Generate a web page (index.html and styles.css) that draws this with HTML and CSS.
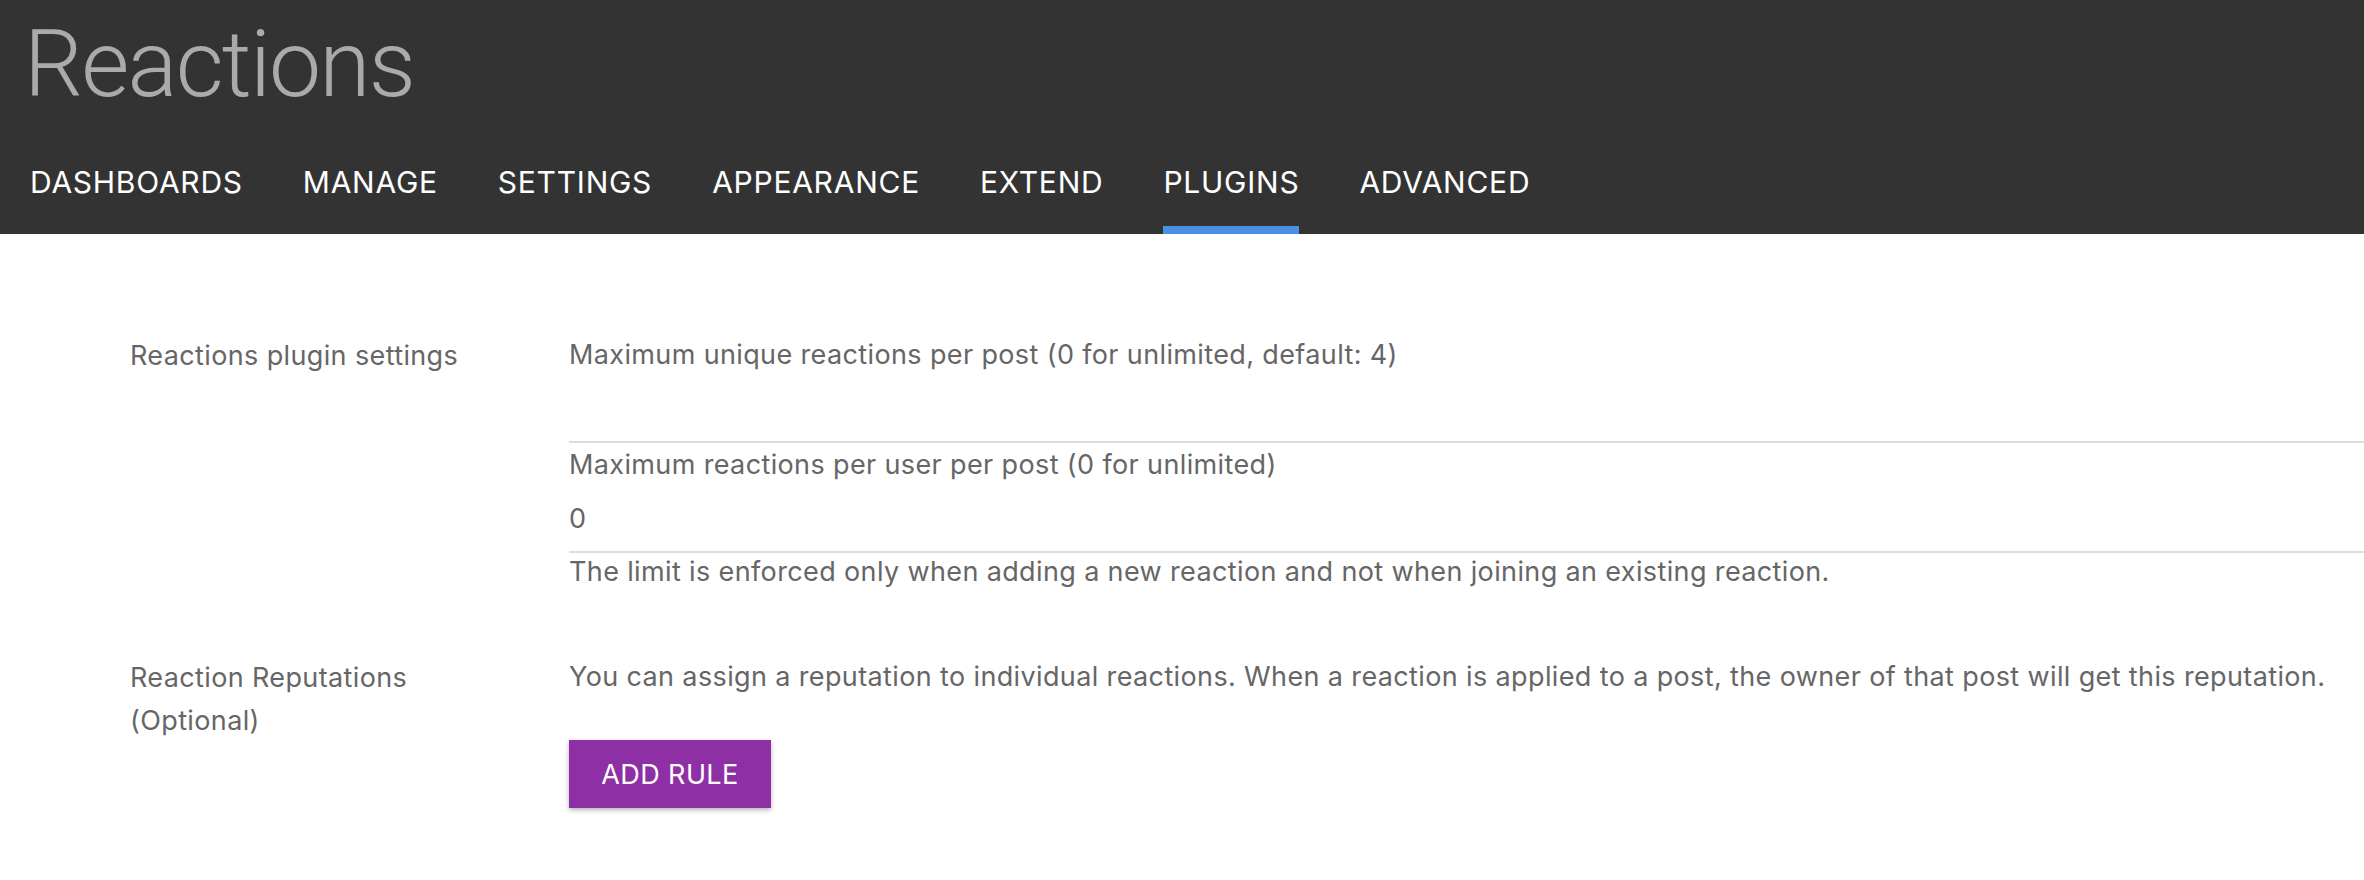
FILE: index.html
```html
<!DOCTYPE html>
<html lang="en">
<head>
<meta charset="utf-8">
<title>Reactions</title>
<link rel="stylesheet" href="styles.css">
</head>
<body>
<header class="topbar">
  <h1 class="title">Reactions</h1>
  <nav class="tabs">
    <a class="tab">DASHBOARDS</a>
    <a class="tab">MANAGE</a>
    <a class="tab">SETTINGS</a>
    <a class="tab">APPEARANCE</a>
    <a class="tab">EXTEND</a>
    <a class="tab active">PLUGINS</a>
    <a class="tab">ADVANCED</a>
  </nav>
</header>
<main class="content">
  <section class="row">
    <div class="row-label">Reactions plugin settings</div>
    <div class="row-body">
      <div class="field">
        <div class="field-label">Maximum unique reactions per post (0 for unlimited, default: 4)</div>
        <div class="field-value"></div>
      </div>
      <div class="field">
        <div class="field-label">Maximum reactions per user per post (0 for unlimited)</div>
        <div class="field-value">0</div>
      </div>
      <div class="help">The limit is enforced only when adding a new reaction and not when joining an existing reaction.</div>
    </div>
  </section>
  <section class="row">
    <div class="row-label">Reaction Reputations<br>(Optional)</div>
    <div class="row-body">
      <div class="desc">You can assign a reputation to individual reactions. When a reaction is applied to a post, the owner of that post will get this reputation.</div>
      <button class="btn">ADD RULE</button>
    </div>
  </section>
</main>
</body>
</html>
```
FILE: styles.css
```css
html, body {
  margin: 0;
  padding: 0;
  background: #ffffff;
  font-family: Inter, Roboto, "Liberation Sans", sans-serif;
}

.topbar {
  background: #333333;
  height: 234px;
  display: flex;
  flex-direction: column;
  box-sizing: border-box;
}

.title {
  margin: 10px 0 0 24px;
  font-family: Roboto, "Liberation Sans", sans-serif;
  font-size: 93px;
  line-height: 110px;
  font-weight: 300;
  color: #aaaaaa;
  letter-spacing: -1.8px;
}

.tabs {
  display: flex;
  gap: 60px;
  margin-top: 42px;
  padding-left: 30px;
}

.tab {
  color: #ffffff;
  font-size: 30px;
  line-height: 40px;
  letter-spacing: 0.75px;
  padding-bottom: 24px;
  border-bottom: 8px solid transparent;
}

.tab.active {
  border-bottom-color: #4a90e2;
}

.content {
  padding: 99px 0 40px 130px;
  display: flex;
  flex-direction: column;
  gap: 64px;
  color: #666666;
  font-size: 27px;
  letter-spacing: 0.37px;
}

.row {
  display: grid;
  grid-template-columns: 439px 1fr;
}

.row-label {
  line-height: 43px;
  padding-top: 1px;
}

.field {
  border-bottom: 2px solid #dddddd;
}

.field-label {
  line-height: 44px;
}

.field-value {
  height: 64px;
  line-height: 64px;
}

.help {
  line-height: 38px;
}

.desc {
  line-height: 44px;
  white-space: nowrap;
}

.btn {
  margin-top: 41px;
  width: 202px;
  height: 68px;
  border: none;
  background: #8e2fa6;
  color: #ffffff;
  font-family: Inter, Roboto, "Liberation Sans", sans-serif;
  font-size: 27px;
  letter-spacing: 0.4px;
  padding: 0;
  box-shadow: 0 2px 5px rgba(0, 0, 0, 0.3);
}
```
